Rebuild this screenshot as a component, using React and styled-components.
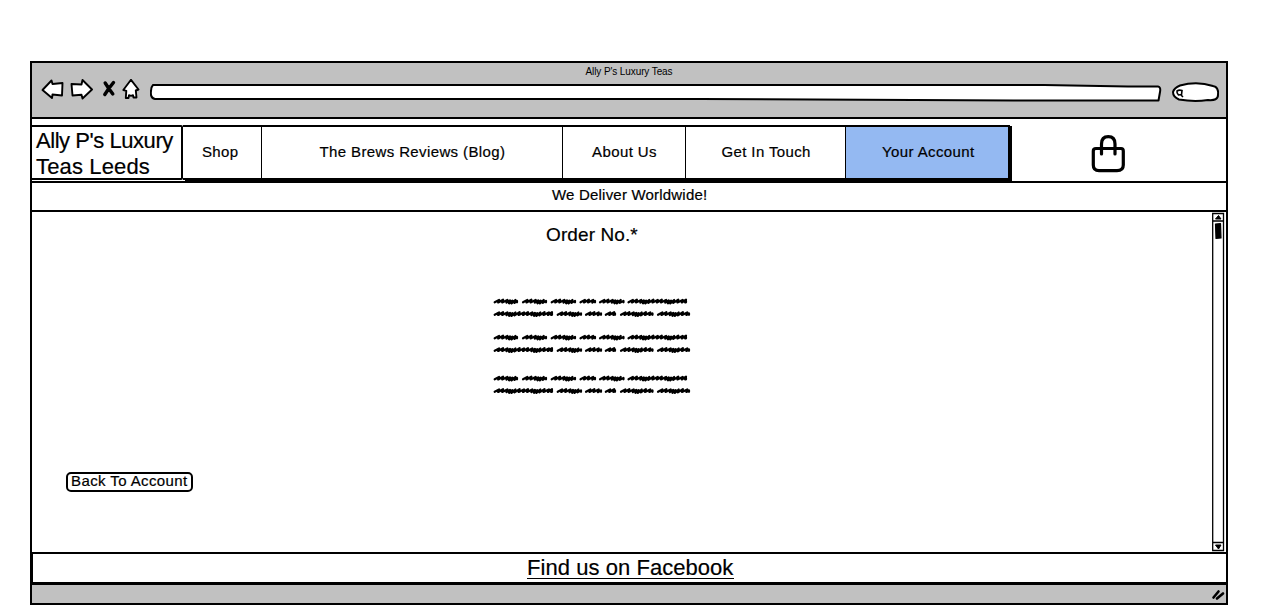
import React from "react";
import styled, { createGlobalStyle } from "styled-components";

const Global = createGlobalStyle`
  * { box-sizing: border-box; }
  body { margin: 0; background: #fff; color: #000; font-family: "Liberation Sans", Arial, sans-serif; -webkit-text-stroke: 0.2px #000; overflow: hidden; }
  svg { display: block; }
`;

const Page = styled.main`
  height: 611px;
  padding: 61px 40px 6px 30px;
`;

const Browser = styled.section`
  display: flex;
  flex-direction: column;
  width: 1198px;
  height: 544px;
`;

const TitleBar = styled.header`
  height: 58px;
  flex: none;
  background: #c1c1c1;
  border: 2px solid #000;
`;

const WindowTitle = styled.div`
  height: 16px;
  line-height: 17px;
  text-align: center;
  font-size: 10px;
  -webkit-text-stroke: 0;
  letter-spacing: ${(p) => p.$spacing}px;
`;

const Toolbar = styled.div`
  display: flex;
  align-items: flex-start;
  height: 38px;
  padding-left: 8px;
`;

const NavIcons = styled.svg`
  width: 102px;
  height: 26px;
  flex: none;
`;

const AddressBar = styled.svg`
  width: 1014px;
  height: 26px;
  margin-left: 8px;
  flex: none;
`;

const SearchBox = styled.svg`
  width: 50px;
  height: 26px;
  margin-left: 8px;
  flex: none;
`;

const SiteHeader = styled.div`
  display: flex;
  height: 62px;
  padding-top: 6px;
  flex: none;
  border-right: 2px solid #000;
  border-left: 2px solid #000;
`;

const Brand = styled.h1`
  width: 153px;
  height: 55px;
  margin: 0 0 0 -2px;
  padding: 1px 0 0 4px;
  border: 2px solid #000;
  border-radius: 2px;
  font-weight: 400;
  font-size: 22px;
  line-height: 26px;
  white-space: nowrap;
`;

const Line = styled.span`
  display: block;
  letter-spacing: ${(p) => p.$spacing}px;
`;

const Menu = styled.nav`
  display: flex;
  height: 55px;
  border-top: 2px solid #000;
  border-bottom: 2px solid #000;
  box-shadow: 2px 1px 0 #000;
`;

const MenuItem = styled.a`
  width: ${(p) => p.$width}px;
  padding-left: ${(p) => p.$inset}px;
  line-height: 50px;
  font-size: 15px;
  letter-spacing: ${(p) => p.$spacing}px;
  white-space: nowrap;
  border-right: ${(p) => (p.$active ? 2 : 1)}px solid #000;
  background: ${(p) => (p.$active ? "#94b9f2" : "#fff")};
`;

const Bag = styled.svg`
  width: 36px;
  height: 40px;
  margin: 9px 0 0 80px;
`;

const Banner = styled.div`
  height: 31px;
  flex: none;
  border: 2px solid #000;
  padding-left: 520px;
  font-size: 15px;
  line-height: 23px;
  letter-spacing: ${(p) => p.$spacing}px;
`;

const Content = styled.div`
  display: flex;
  justify-content: space-between;
  height: 340px;
  flex: none;
  border-left: 2px solid #000;
  border-right: 2px solid #000;
`;

const Order = styled.article`
  display: flex;
  flex-direction: column;
  align-items: flex-start;
`;

const OrderTitle = styled.h2`
  margin: 9px 0 0 514px;
  font-weight: 400;
  font-size: 19px;
  line-height: 28px;
  letter-spacing: ${(p) => p.$spacing}px;
`;

const Scribble = styled.svg`
  width: 200px;
  height: 110px;
  margin: 44px 0 0 461px;
`;

const BackButton = styled.button`
  width: 127px;
  height: 20px;
  margin: 69px 0 0 34px;
  padding: 0 0 2px 3px;
  border: 2px solid #000;
  border-radius: 5px;
  background: #fff;
  color: #000;
  font: 15px/14px "Liberation Sans", Arial, sans-serif;
  letter-spacing: ${(p) => p.$spacing}px;
  text-align: left;
  white-space: nowrap;
`;

const Scrollbar = styled.svg`
  width: 14px;
  height: 340px;
  margin-right: 1px;
`;

const Footer = styled.footer`
  height: 32px;
  flex: none;
  padding-left: 494px;
  border: 2px solid #000;
  border-left-width: 3px;
`;

const FacebookLink = styled.a`
  display: inline-block;
  height: 25px;
  width: 207px;
  font-size: 22px;
  line-height: 27px;
  letter-spacing: ${(p) => p.$spacing}px;
  white-space: nowrap;
  border-bottom: 1px solid #000;
`;

const StatusBar = styled.div`
  display: flex;
  justify-content: flex-end;
  height: 21px;
  flex: none;
  background: #c1c1c1;
  border: 2px solid #000;
  border-top-width: 1px;
`;

const Grip = styled.svg`
  width: 20px;
  height: 18px;
`;

const ROW_ONE = [[1.7, 24], [30, 53], [58.7, 82], [87.5, 102], [107, 130.5], [135.5, 193]];
const ROW_TWO = [[1.7, 59], [64.7, 88], [93, 108], [112.8, 122], [128, 159.5], [165, 196]];
const ROWS = [
  [ROW_ONE, 8.5], [ROW_TWO, 21],
  [ROW_ONE, 44.5], [ROW_TWO, 57],
  [ROW_ONE, 85.5], [ROW_TWO, 98],
];

const STROKES = [
  [4.4, 1.5, 1], [4, 1.8, 0.9], [4.3, 1.5, 1.2], [2.6, 1.1, 1.8],
  [2.4, 0.8, 1.9], [3, 1.5, 1.4], [4.2, 1.8, 1],
];

function wordPath(from, to, y) {
  let d = `M${from} ${y + 0.8}`;
  let x = from;
  for (let i = 0; x + 3 < to; i += 1) {
    const [step, up, down] = STROKES[i % STROKES.length];
    x = Math.min(x + step, to);
    d += `L${x} ${y - up}L${x - 0.9} ${y + down}`;
  }
  return d + `L${to} ${y - 0.6}V${y + 0.8}`;
}

const MENU = [
  { label: "Shop", width: 79, inset: 19, spacing: 0.35 },
  { label: "The Brews Reviews (Blog)", width: 301, inset: 57.5, spacing: 0.38 },
  { label: "About Us", width: 123, inset: 29, spacing: 0.4 },
  { label: "Get In Touch", width: 160, inset: 35.5, spacing: 0.38 },
  { label: "Your Account", width: 164, inset: 36, spacing: 0.4, active: true },
];

export default function App() {
  return (
    <>
      <Global />
      <Page>
        <Browser>
          <TitleBar>
            <WindowTitle $spacing={-0.1}>Ally P's Luxury Teas</WindowTitle>
            <Toolbar>
              <NavIcons viewBox="40 79 102 26" fill="#fff" stroke="#000" strokeWidth="1.9" strokeLinejoin="round">
                <path d="M42.5 90L51.5 80.5L52.5 84L62.5 83L62 95.5L52.5 94.5L52 98Z" />
                <path d="M71.5 84L81.5 84.5L82.5 80L92 89.5L82.5 98.5L81.5 94.8L72.5 95.5Z" />
                <path d="M105.2 83L108.8 88.5L113.5 82.5M108.8 88.5L104.8 94.5M108.8 88.5L112.8 94" fill="none" strokeWidth="3.4" strokeLinecap="round" />
                <path d="M131 79.8L138.5 89.5L135.8 90.5L136.5 97.5H133.5L133 95.2L131 95.8L129 95.2L128.5 98H125.8L126.3 90.8L123.3 90Z" />
              </NavIcons>
              <AddressBar viewBox="150 79 1014 26" fill="#fff" stroke="#000" strokeWidth="2" strokeLinejoin="round">
                <path d="M153 85H1044L1128 86.5L1158 86.5Q1161 87 1160 92L1158.5 100.5H1014L700 99H155Q150 98 151 91Q151 87 153 85Z" />
              </AddressBar>
              <SearchBox viewBox="1172 79 50 26" fill="#fff" stroke="#000" strokeWidth="2">
                <path d="M1180 85.5Q1197 81 1213 86Q1219 87 1218 95Q1218 101 1208 100Q1194 102 1179 99.5Q1173 97 1173 92Q1174 88 1180 85.5Z" />
                <path d="M1177 91Q1179 89.5 1182 90.5L1181.5 94.5L1178.5 95Q1176.5 93 1177 91ZM1181 95L1183 97" strokeWidth="1.6" />
              </SearchBox>
            </Toolbar>
          </TitleBar>
          <SiteHeader>
            <Brand>
              <Line $spacing={-0.45}>Ally P's Luxury</Line>
              <Line $spacing={0.15}>Teas Leeds</Line>
            </Brand>
            <Menu>
              {MENU.map((m) => (
                <MenuItem key={m.label} $width={m.width} $inset={m.inset} $spacing={m.spacing} $active={m.active}>
                  {m.label}
                </MenuItem>
              ))}
            </Menu>
            <Bag viewBox="1090 134 36 40" fill="none" stroke="#000" strokeWidth="3.2" strokeLinecap="round">
              <path d="M1096 148.5H1121Q1123.3 148.5 1123.3 151V165Q1123.3 170.7 1117 170.7H1099Q1093.3 170.7 1093.3 165V151Q1093.3 148.5 1096 148.5Z" />
              <path d="M1101.5 154V144Q1101.5 136.7 1108.3 136.7Q1115 136.7 1115 144V154" />
            </Bag>
          </SiteHeader>
          <Banner $spacing={0.2}>We Deliver Worldwide!</Banner>
          <Content>
            <Order>
              <OrderTitle $spacing={0.1}>Order No.*</OrderTitle>
              <Scribble viewBox="0 0 200 110" fill="none" stroke="#000" strokeWidth="2.2" strokeLinejoin="round" strokeLinecap="round">
                {ROWS.map(([words, y]) => words.map(([a, b]) => <path key={`${y}-${a}`} d={wordPath(a, b, y)} />))}
              </Scribble>
              <BackButton $spacing={0.4}>Back To Account</BackButton>
            </Order>
            <Scrollbar viewBox="1211 212 14 340" fill="none" stroke="#000" strokeWidth="1.3">
              <path d="M1212.7 213.5H1223.5V550.5H1212.7ZM1212.7 221H1223.5M1212.7 542.5H1223.5" />
              <path d="M1215.5 219L1218.5 215.5L1221 219ZM1215.5 545L1218.5 549L1221 545Z" fill="#000" strokeWidth="1" />
              <path d="M1215.5 224L1220.5 223.5L1221 238L1216 238.5Z" fill="#000" strokeWidth="1.2" strokeLinejoin="round" />
            </Scrollbar>
          </Content>
          <Footer>
            <FacebookLink $spacing={0.05}>Find us on Facebook</FacebookLink>
          </Footer>
          <StatusBar>
            <Grip viewBox="1206 586 20 18" fill="none" stroke="#000" strokeWidth="2.6" strokeLinecap="round">
              <path d="M1213.5 598.5L1218.5 592.5M1217 599.5L1223 594.5" />
            </Grip>
          </StatusBar>
        </Browser>
      </Page>
    </>
  );
}
